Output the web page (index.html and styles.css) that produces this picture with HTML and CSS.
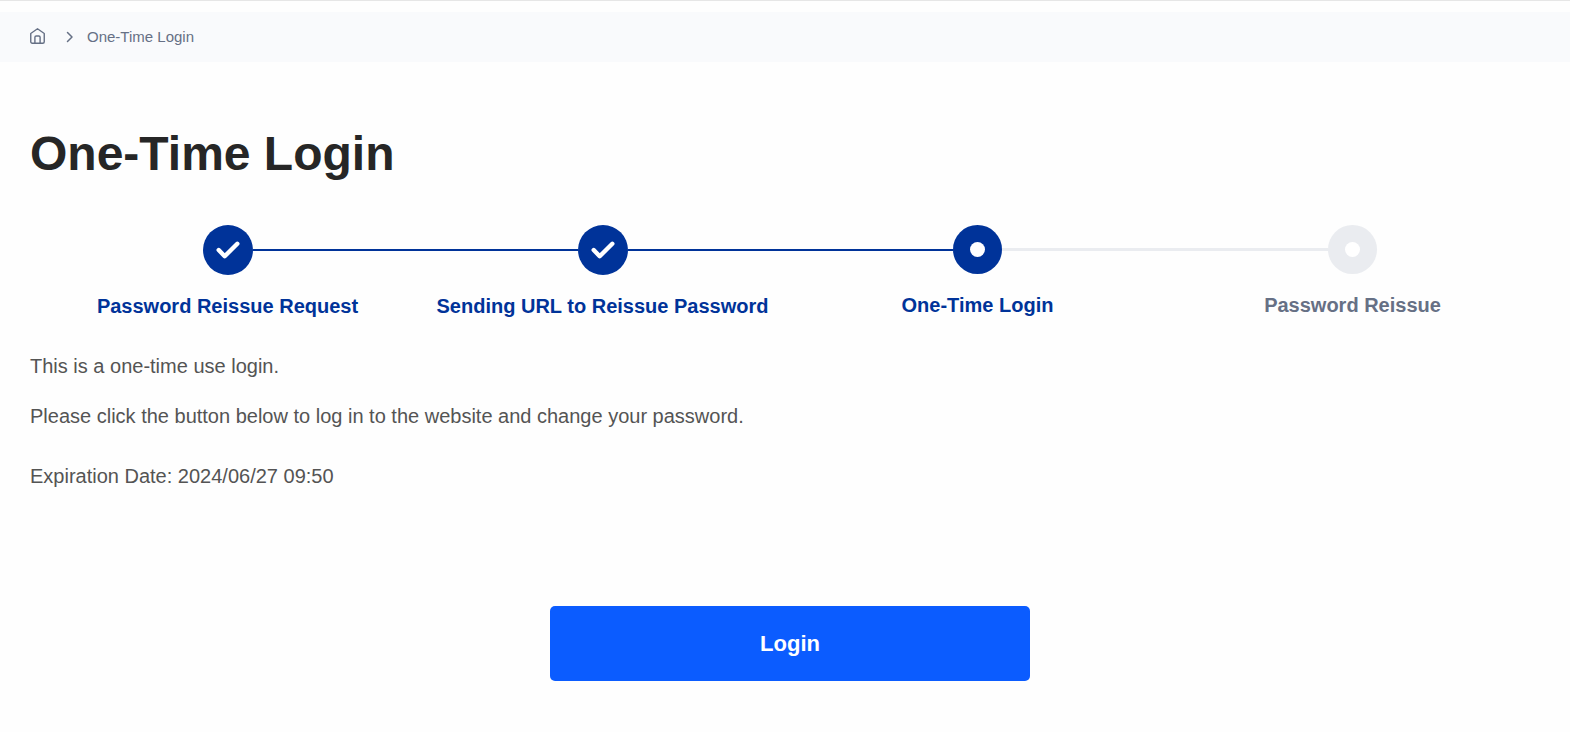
FILE: index.html
```
<!DOCTYPE html>
<html lang="en">
<head>
    <meta charset="UTF-8">
    <meta name="viewport" content="width=device-width, initial-scale=1">
    <title>One-Time Login</title>
    <link rel="stylesheet" href="styles.css">
</head>
<body>
<nav class="breadcrumb" aria-label="Breadcrumb">
    <a class="home" href="#" aria-label="Home">
        <svg width="15" height="18" viewBox="0 0 15 18">
            <path d="M.75 5.5L7.5.8l6.75 4.7v8.2a1.5 1.5 0 0 1-1.5 1.5H2.25a1.5 1.5 0 0 1-1.5-1.5z"/>
            <path d="M4.9 15V9.3a1.3 1.3 0 0 1 1.3-1.3h2.6a1.3 1.3 0 0 1 1.3 1.3V15"/>
        </svg>
    </a>
    <svg class="arrow" width="8" height="12" viewBox="0 0 8 12">
        <path d="M1.5 1.5L6 6l-4.5 4.5"/>
    </svg>
    <span>One-Time Login</span>
</nav>
<main class="content">
    <h1 class="title">One-Time Login</h1>
    <ol class="steps">
        <li class="step done">
            <div class="marker">
                <span class="line none"></span>
                <span class="circle">
                    <svg width="24" height="18" viewBox="0 0 24 18"><path d="M2.7 9l6 6.2L21.3 2.8"/></svg>
                </span>
                <span class="line"></span>
            </div>
            <div class="label">Password Reissue Request</div>
        </li>
        <li class="step done">
            <div class="marker">
                <span class="line"></span>
                <span class="circle">
                    <svg width="24" height="18" viewBox="0 0 24 18"><path d="M2.7 9l6 6.2L21.3 2.8"/></svg>
                </span>
                <span class="line"></span>
            </div>
            <div class="label">Sending URL to Reissue Password</div>
        </li>
        <li class="step on" aria-current="step">
            <div class="marker">
                <span class="line"></span>
                <span class="circle"><i class="dot"></i></span>
                <span class="line next"></span>
            </div>
            <div class="label">One-Time Login</div>
        </li>
        <li class="step todo">
            <div class="marker">
                <span class="line next"></span>
                <span class="circle"><i class="dot"></i></span>
                <span class="line none"></span>
            </div>
            <div class="label">Password Reissue</div>
        </li>
    </ol>
    <p>This is a one-time use login.</p>
    <p>Please click the button below to log in to the website and change your password.</p>
    <p class="expire">Expiration Date: 2024/06/27 09:50</p>
    <form class="loginForm">
        <button type="submit" class="btn">Login</button>
    </form>
</main>
</body>
</html>
```
FILE: styles.css
```
*{
    box-sizing: border-box;
    margin: 0;
    padding: 0;
}
body{
    border-top: 1px solid #e6e6e6;
    background: #fefefe;
    color: #545454;
    font: 20px/30px "Liberation Sans", Arial, sans-serif;
}
svg{
    display: block;
    fill: none;
    stroke: currentColor;
    stroke-linecap: round;
    stroke-linejoin: round;
}
/* breadcrumb */
.breadcrumb{
    display: flex;
    align-items: center;
    height: 50px;
    margin-top: 11px;
    padding: 0 30px;
    background: #f9fafc;
    color: #667085;
    font-size: 15px;
}
.home{
    color: inherit;
}
.home svg{
    stroke-width: 1.4;
}
.arrow{
    margin: 0 13px 0 21px;
    stroke-width: 1.5;
}
.content{
    padding: 62px 20px 50px 30px;
}
.title{
    color: #262626;
    font-size: 48px;
    line-height: 60px;
}
/* steps */
.steps{
    display: flex;
    margin: 41px 0 30px;
    padding: 0 10px;
    list-style: none;
}
.step{
    flex: 1;
    color: #039;
    font-weight: bold;
    text-align: center;
}
.marker{
    display: flex;
    align-items: center;
    margin-bottom: 16px;
}
.line{
    flex: 1;
    height: 2px;
    background: #039;
}
.line.next{
    height: 3px;
    background: #eaecf0;
}
.line.none{
    background: none;
}
.circle{
    display: flex;
    align-items: center;
    justify-content: center;
    width: 49px;
    height: 49px;
    border-radius: 50%;
    background: #039;
    color: #fff;
}
.done .circle{
    width: 50px;
    height: 50px;
}
.circle svg{
    stroke-width: 4.4;
}
.dot{
    width: 15px;
    height: 15px;
    border-radius: 50%;
    background: #fff;
}
.todo{
    color: #667085;
}
.todo .circle{
    background: #eaecf0;
}
/* text */
.content p{
    margin-bottom: 20px;
}
.content .expire{
    margin-top: 30px;
}
.loginForm{
    display: flex;
    justify-content: center;
    margin-top: 115px;
}
.btn{
    width: 480px;
    max-width: 100%;
    height: 75px;
    border: none;
    border-radius: 5px;
    background: #0b5cff;
    color: #fff;
    font-family: inherit;
    font-size: 22px;
    font-weight: bold;
    cursor: pointer;
}
```
